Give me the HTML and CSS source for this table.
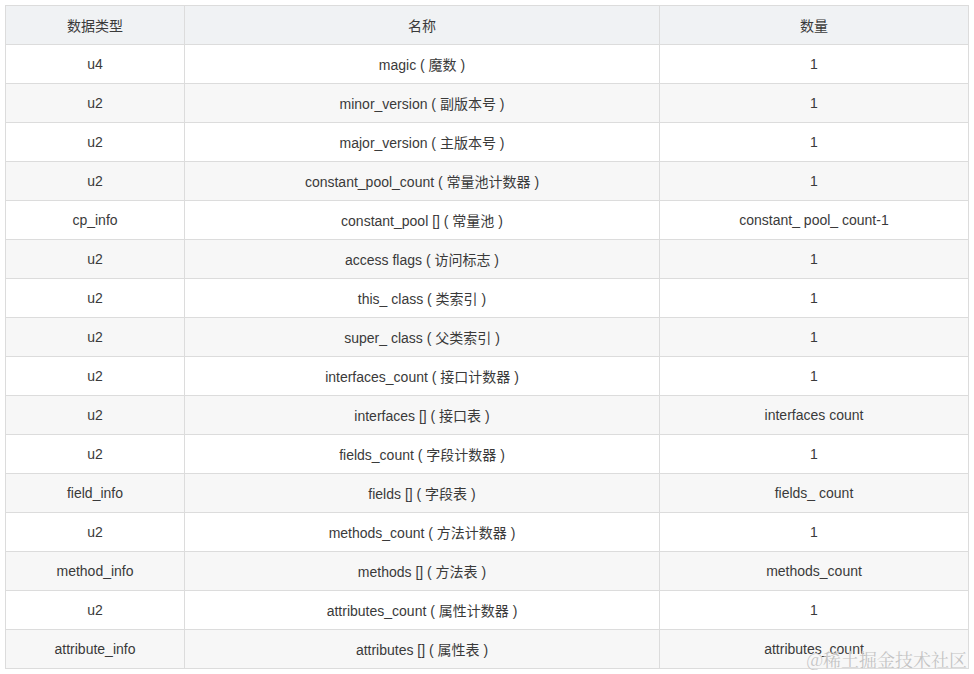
FILE: index.html
```html
<!DOCTYPE html>
<html>
<head>
<meta charset="utf-8">
<link rel="stylesheet" href="styles.css">
</head>
<body>
<div class="page">
<table class="grid">
<colgroup><col class="c1"><col class="c2"><col class="c3"></colgroup>
<thead>
<tr><th>数据类型</th><th>名称</th><th>数量</th></tr>
</thead>
<tbody>
<tr><td>u4</td><td>magic ( 魔数 )</td><td>1</td></tr>
<tr><td>u2</td><td>minor_version ( 副版本号 )</td><td>1</td></tr>
<tr><td>u2</td><td>major_version ( 主版本号 )</td><td>1</td></tr>
<tr><td>u2</td><td>constant_pool_count ( 常量池计数器 )</td><td>1</td></tr>
<tr><td>cp_info</td><td>constant_pool [] ( 常量池 )</td><td>constant_ pool_ count-1</td></tr>
<tr><td>u2</td><td>access flags ( 访问标志 )</td><td>1</td></tr>
<tr><td>u2</td><td>this_ class ( 类索引 )</td><td>1</td></tr>
<tr><td>u2</td><td>super_ class ( 父类索引 )</td><td>1</td></tr>
<tr><td>u2</td><td>interfaces_count ( 接口计数器 )</td><td>1</td></tr>
<tr><td>u2</td><td>interfaces [] ( 接口表 )</td><td>interfaces count</td></tr>
<tr><td>u2</td><td>fields_count ( 字段计数器 )</td><td>1</td></tr>
<tr><td>field_info</td><td>fields [] ( 字段表 )</td><td>fields_ count</td></tr>
<tr><td>u2</td><td>methods_count ( 方法计数器 )</td><td>1</td></tr>
<tr><td>method_info</td><td>methods [] ( 方法表 )</td><td>methods_count</td></tr>
<tr><td>u2</td><td>attributes_count ( 属性计数器 )</td><td>1</td></tr>
<tr><td>attribute_info</td><td>attributes [] ( 属性表 )</td><td>attributes_count</td></tr>
</tbody>
</table>
<div class="watermark">@稀土掘金技术社区</div>
</div>
</body>
</html>
```
FILE: styles.css
```css
html, body {
  margin: 0;
  padding: 0;
  background: #fff;
}
.page {
  position: relative;
  width: 974px;
  height: 674px;
  padding: 5px 0 0 5px;
  box-sizing: border-box;
}
.grid {
  border-collapse: collapse;
  table-layout: fixed;
  width: 963px;
  font-family: "Liberation Sans", "Noto Sans CJK SC", sans-serif;
  font-size: 14px;
  color: #3a3a3a;
}
.c1 { width: 179px; }
.c2 { width: 475px; }
.c3 { width: 309px; }
.grid th, .grid td {
  border: 1px solid #dcdcdc;
  height: 39px;
  padding: 0 4px;
  text-align: center;
  vertical-align: middle;
  box-sizing: border-box;
  white-space: nowrap;
}
.grid th {
  font-weight: normal;
  background: #f0f2f4;
}
.grid tbody tr:nth-child(even) td {
  background: #f7f7f7;
}
.watermark {
  position: absolute;
  right: 7px;
  bottom: 5px;
  font-family: "Noto Serif CJK SC", "Liberation Serif", serif;
  font-size: 18px;
  line-height: 20px;
  color: #c4c4c4;
  text-shadow: 0 0 1px #fff;
}
```
